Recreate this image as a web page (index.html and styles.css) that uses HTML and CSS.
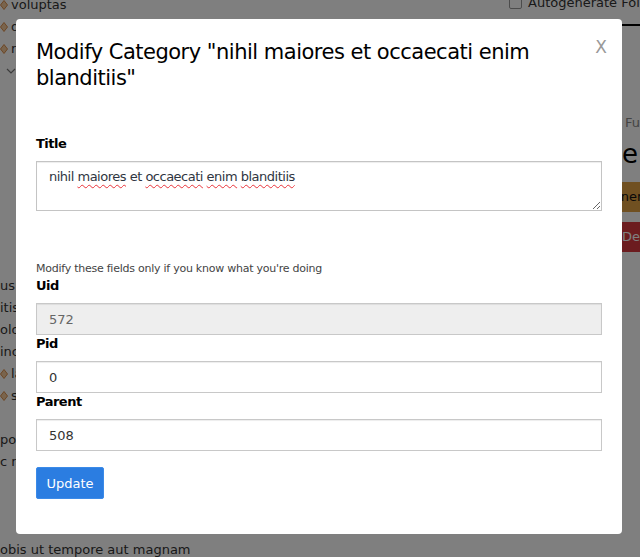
FILE: index.html
```html
<!DOCTYPE html>
<html lang="en">
<head>
<meta charset="utf-8">
<title>Modify Category</title>
<link rel="stylesheet" href="styles.css">
</head>
<body>
<div class="page">
  <div class="tree">
    <div class="tree-top">
      <div class="node"><svg class="dia" viewBox="0 0 8 10" width="8" height="10"><path d="M4 0.5 L7.5 5 L4 9.5 L0.5 5 Z" fill="#f3c89a" stroke="#d98c4a" stroke-width="1"/></svg><span>voluptas</span></div>
      <div class="node"><svg class="dia" viewBox="0 0 8 10" width="8" height="10"><path d="M4 0.5 L7.5 5 L4 9.5 L0.5 5 Z" fill="#f3c89a" stroke="#d98c4a" stroke-width="1"/></svg><span>dolorem</span></div>
      <div class="node"><svg class="dia" viewBox="0 0 8 10" width="8" height="10"><path d="M4 0.5 L7.5 5 L4 9.5 L0.5 5 Z" fill="#f3c89a" stroke="#d98c4a" stroke-width="1"/></svg><span>rerum</span></div>
      <div class="node chev"><svg viewBox="0 0 10 6" width="10" height="6"><path d="M1 1 L5 5 L9 1" fill="none" stroke="#777" stroke-width="1.2"/></svg></div>
    </div>
    <div class="tree-mid">
      <div class="leaf">us quia</div>
      <div class="leaf">itis quas</div>
      <div class="leaf">olor sit</div>
      <div class="leaf">inciduntur</div>
      <div class="node"><svg class="dia" viewBox="0 0 8 10" width="8" height="10"><path d="M4 0.5 L7.5 5 L4 9.5 L0.5 5 Z" fill="#f3c89a" stroke="#d98c4a" stroke-width="1"/></svg><span>laborum</span></div>
      <div class="node"><svg class="dia" viewBox="0 0 8 10" width="8" height="10"><path d="M4 0.5 L7.5 5 L4 9.5 L0.5 5 Z" fill="#f3c89a" stroke="#d98c4a" stroke-width="1"/></svg><span>sint</span></div>
      <div class="leaf blank"></div>
      <div class="leaf">porro</div>
      <div class="leaf">c nam</div>
      <div class="leaf blank"></div>
      <div class="leaf blank"></div>
      <div class="leaf blank"></div>
      <div class="leaf long">obis ut tempore aut magnam</div>
    </div>
  </div>
  <div class="side">
    <label class="auto"><span class="box"></span>Autogenerate Folders</label>
    <div class="rule"></div>
    <div class="side-body">
      <div class="hint">Full path</div>
      <div class="head">e</div>
      <div class="btn-warn">Regenerate</div>
      <div class="btn-del">Delete</div>
    </div>
  </div>
</div>

<div class="overlay">
  <div class="modal">
    <span class="close">X</span>
    <h2 class="modal-title">Modify Category "nihil maiores et occaecati enim blanditiis"</h2>
    <form class="form">
      <label class="lbl">Title</label>
      <div class="textarea" role="textbox"><span>nihil</span> <span class="sp">maiores</span> <span>et</span> <span class="sp">occaecati</span> <span class="sp">enim</span> <span class="sp">blanditiis</span></div>
      <p class="note">Modify these fields only if you know what you're doing</p>
      <label class="lbl">Uid</label>
      <input class="inp" type="text" value="572" disabled>
      <label class="lbl">Pid</label>
      <input class="inp" type="text" value="0">
      <label class="lbl">Parent</label>
      <input class="inp" type="text" value="508">
      <button type="button" class="btn">Update</button>
    </form>
  </div>
</div>
</body>
</html>
```

FILE: styles.css
```css
html, body {
  margin: 0;
  padding: 0;
  overflow: hidden;
  width: 640px;
  height: 557px;
  background: #fff;
}
body {
  font-family: "DejaVu Sans", Verdana, sans-serif;
  font-size: 13px;
  color: #333;
}
.page {
  display: flex;
  width: 760px;
}
.tree {
  width: 509px;
  flex: none;
}
.tree-top {
  margin-top: -6px;
}
.node, .leaf {
  height: 22px;
  line-height: 22px;
  white-space: nowrap;
  display: flex;
  align-items: center;
}
.node .dia {
  margin-right: 3px;
  flex: none;
}
.chev {
  padding-left: 6px;
}
.tree-mid {
  margin-top: 193px;
}
.side {
  flex: none;
  width: 251px;
  margin-top: -6px;
}
.auto {
  display: flex;
  align-items: center;
  height: 16px;
  gap: 6px;
}
.box {
  width: 11px;
  height: 11px;
  border: 1px solid #999;
  border-radius: 2px;
  background: #fff;
}
.rule {
  margin-top: 14px;
  border-top: 2px solid #000;
}
.side-body {
  padding-top: 88px;
}
.hint {
  color: #888;
  line-height: 18px;
  padding-left: 116px;
}
.head {
  font-size: 26px;
  line-height: 32px;
  margin-top: 6px;
  color: #000;
  padding-left: 113px;
}
.btn-warn, .btn-del {
  height: 30px;
  line-height: 30px;
  white-space: nowrap;
}
.btn-warn {
  background: #e0a042;
  color: #111;
  margin-top: 12px;
  margin-left: 60px;
  padding-left: 19px;
}
.btn-del {
  background: #d9383f;
  color: #fff;
  margin-top: 10px;
  margin-left: 111px;
  padding-left: 2px;
}

.overlay {
  position: fixed;
  inset: 0;
  background: rgba(0, 0, 0, 0.5);
  padding: 19px 0 0 16px;
}
.modal {
  position: relative;
  box-sizing: border-box;
  width: 606px;
  height: 515px;
  background: #fff;
  border-radius: 4px;
  padding: 20px 20px 0 20px;
}
.close {
  position: absolute;
  top: 17px;
  right: 15px;
  font-size: 17px;
  color: #999;
  line-height: 22px;
}
.modal-title {
  margin: 0;
  font-size: 21px;
  letter-spacing: -0.5px;
  line-height: 26px;
  font-weight: normal;
  color: #000;
  width: 545px;
}
.form {
  margin-top: 44px;
  display: flex;
  flex-direction: column;
  align-items: flex-start;
}
.lbl {
  display: block;
  font-weight: bold;
  font-size: 13px;
  letter-spacing: -0.5px;
  line-height: 18px;
  margin-bottom: 8px;
  color: #000;
}
.textarea {
  box-sizing: border-box;
  width: 566px;
  height: 50px;
  border: 1px solid #c4c4c4;
  box-shadow: inset 0 1px 1px rgba(0, 0, 0, 0.075);
  padding: 6px 12px;
  line-height: 18px;
  letter-spacing: -0.5px;
  color: #2f3642;
  overflow: auto;
  resize: both;
}
.sp {
  text-decoration: underline wavy #e8333a;
  text-decoration-thickness: 1px;
  text-underline-offset: 3px;
}
.note {
  margin: 49px 0 0 0;
  font-size: 11px;
  letter-spacing: -0.25px;
  line-height: 17px;
  color: #444;
}
.inp {
  box-sizing: border-box;
  width: 566px;
  height: 32px;
  border: 1px solid #c8c8c8;
  box-shadow: inset 0 1px 1px rgba(0, 0, 0, 0.075);
  padding: 0 12px;
  margin: 0;
  font-family: inherit;
  font-size: 13px;
  color: #333;
  background: #fff;
  outline: none;
}
.inp:disabled {
  background: #eee;
  color: #666;
}
.btn {
  margin-top: 16px;
  height: 32px;
  width: 68px;
  border: 1px solid #3b8ae8;
  border-radius: 2px;
  background: #2b7de1;
  color: #fff;
  font-family: inherit;
  font-size: 13px;
  padding: 0;
}
```
